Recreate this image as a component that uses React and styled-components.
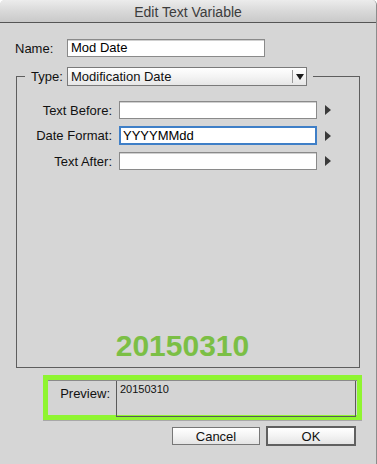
import React from "react";
import styled, { createGlobalStyle } from "styled-components";

const Global = createGlobalStyle`
  html, body {
    margin: 0;
    padding: 0;
    background: #ffffff;
  }
  body {
    font-family: "Liberation Sans", Arial, sans-serif;
    font-size: 13px;
    color: #111;
  }
`;

const Window = styled.div`
  width: 376px;
  height: 464px;
  background: #d6d6d6;
  border-right: 1px solid #8c8c8c;
  border-top-left-radius: 5px;
  border-top-right-radius: 5px;
  overflow: hidden;
  display: flex;
  flex-direction: column;
`;

const TitleBar = styled.div`
  height: 23px;
  flex: none;
  box-sizing: border-box;
  background: linear-gradient(#ececec, #d9d9d9 50%, #c9c9c9);
  border-bottom: 1px solid #555;
  display: flex;
  align-items: center;
  justify-content: center;
  font-size: 14px;
  color: #3c3c3c;
  padding-top: 1px;
`;

const Content = styled.div`
  padding-top: 16px;
  display: flex;
  flex-direction: column;
  align-items: flex-start;
`;

const NameRow = styled.div`
  display: flex;
  align-items: center;
  padding-left: 15px;
`;

const NameLabel = styled.span`
  width: 52px;
`;

const TextInput = styled.div`
  box-sizing: border-box;
  width: ${(p) => p.w || 198}px;
  height: 18px;
  background: #fff;
  border: 1px solid #8a8a8a;
  box-shadow: inset 0 1px 0 #d0d0d0;
  padding: 0 3px;
  line-height: 16px;
  font-size: 13px;
  color: #000;
  white-space: nowrap;

  &.focused {
    border: 2px solid #3f7fc7;
    box-shadow: none;
    height: 19px;
    padding: 0 2px;
    line-height: 15px;
  }
`;

const Group = styled.fieldset`
  margin: 10px 0 0 16px;
  padding: 0;
  width: 344px;
  box-sizing: border-box;
  border: 1px solid #5e5e5e;
  min-width: 0;
`;

const Legend = styled.legend`
  margin-left: 8px;
  padding: 0 6px;
  display: flex;
  align-items: center;
`;

const TypeLabel = styled.span`
  width: 36px;
`;

const Select = styled.div`
  box-sizing: border-box;
  width: 240px;
  height: 19px;
  border: 1px solid #7a7a7a;
  background: linear-gradient(#ffffff, #f4f4f4 50%, #e6e6e6);
  display: flex;
  align-items: center;
`;

const SelectText = styled.span`
  flex: 1;
  padding-left: 3px;
  line-height: 17px;
`;

const SelectButton = styled.span`
  width: 13px;
  height: 13px;
  border-left: 1px solid #9a9a9a;
  display: flex;
  align-items: center;
  justify-content: center;
`;

const GroupBody = styled.div`
  height: 281px;
  display: flex;
  flex-direction: column;
  padding-top: 15px;
  box-sizing: border-box;
`;

const FieldGrid = styled.div`
  display: grid;
  grid-template-columns: 95px 198px 14px;
  column-gap: 7px;
  row-gap: 7px;
  align-items: center;
`;

const FieldLabel = styled.span`
  text-align: right;
  white-space: nowrap;
`;

const Arrow = styled.span`
  display: flex;
  align-items: center;
  padding-left: 1px;
`;

const BigValue = styled.div`
  margin-top: auto;
  margin-bottom: 6px;
  text-align: center;
  padding-right: 11px;
  font-weight: bold;
  font-size: 30px;
  line-height: 30px;
  color: #7bbf45;
`;

const PreviewBox = styled.div`
  margin: 7px 0 0 43px;
  width: 319px;
  height: 45px;
  box-sizing: border-box;
  border: 5px solid #8ff531;
  box-shadow: 0 1px 0 #a8a8a8;
  display: flex;
`;

const PreviewInner = styled.div`
  flex: 1;
  display: flex;
  border-top: 1px solid #8a8a8a;
  background: #d4d4d4;
`;

const PreviewLabel = styled.span`
  width: 62px;
  text-align: right;
  padding-top: 5px;
`;

const PreviewField = styled.div`
  margin-left: 6px;
  flex: 1;
  margin-right: 1px;
  height: 36px;
  box-sizing: border-box;
  border: 1px solid #5a5a5a;
  border-top: none;
  font-size: 11px;
  padding: 2px 0 0 3px;
`;

const ButtonRow = styled.div`
  align-self: stretch;
  display: flex;
  justify-content: flex-end;
  align-items: center;
  gap: 6px;
  margin-top: 6px;
  padding-right: 20px;
`;

const Button = styled.div`
  box-sizing: border-box;
  width: ${(p) => (p.$default ? 90 : 88)}px;
  height: ${(p) => (p.$default ? 20 : 18)}px;
  border: ${(p) => (p.$default ? "2px solid #606060" : "1px solid #777")};
  background: linear-gradient(#ffffff, #f3f3f3 50%, #e4e4e4);
  display: flex;
  align-items: center;
  justify-content: center;
  font-size: 13px;
  color: #111;
`;

const TriangleRight = () => (
  <svg width="6" height="10" viewBox="0 0 6 10">
    <polygon points="0,0 6,5 0,10" fill="#3a3a3a" />
  </svg>
);

const TriangleDown = () => (
  <svg width="8" height="6" viewBox="0 0 8 6">
    <polygon points="0,0 8,0 4,6" fill="#1a1a1a" />
  </svg>
);

const fields = [
  { label: "Text Before:", value: "" },
  { label: "Date Format:", value: "YYYYMMdd", focused: true },
  { label: "Text After:", value: "" },
];

export default function App() {
  return (
    <>
      <Global />
      <Window>
        <TitleBar>Edit Text Variable</TitleBar>
        <Content>
          <NameRow>
            <NameLabel>Name:</NameLabel>
            <TextInput>Mod Date</TextInput>
          </NameRow>

          <Group>
            <Legend>
              <TypeLabel>Type:</TypeLabel>
              <Select>
                <SelectText>Modification Date</SelectText>
                <SelectButton>
                  <TriangleDown />
                </SelectButton>
              </Select>
            </Legend>
            <GroupBody>
              <FieldGrid>
                {fields.map((f) => (
                  <React.Fragment key={f.label}>
                    <FieldLabel>{f.label}</FieldLabel>
                    <TextInput className={f.focused ? "focused" : ""}>
                      {f.value}
                    </TextInput>
                    <Arrow>
                      <TriangleRight />
                    </Arrow>
                  </React.Fragment>
                ))}
              </FieldGrid>
              <BigValue>20150310</BigValue>
            </GroupBody>
          </Group>

          <PreviewBox>
            <PreviewInner>
              <PreviewLabel>Preview:</PreviewLabel>
              <PreviewField>20150310</PreviewField>
            </PreviewInner>
          </PreviewBox>

          <ButtonRow>
            <Button>Cancel</Button>
            <Button $default>OK</Button>
          </ButtonRow>
        </Content>
      </Window>
    </>
  );
}
